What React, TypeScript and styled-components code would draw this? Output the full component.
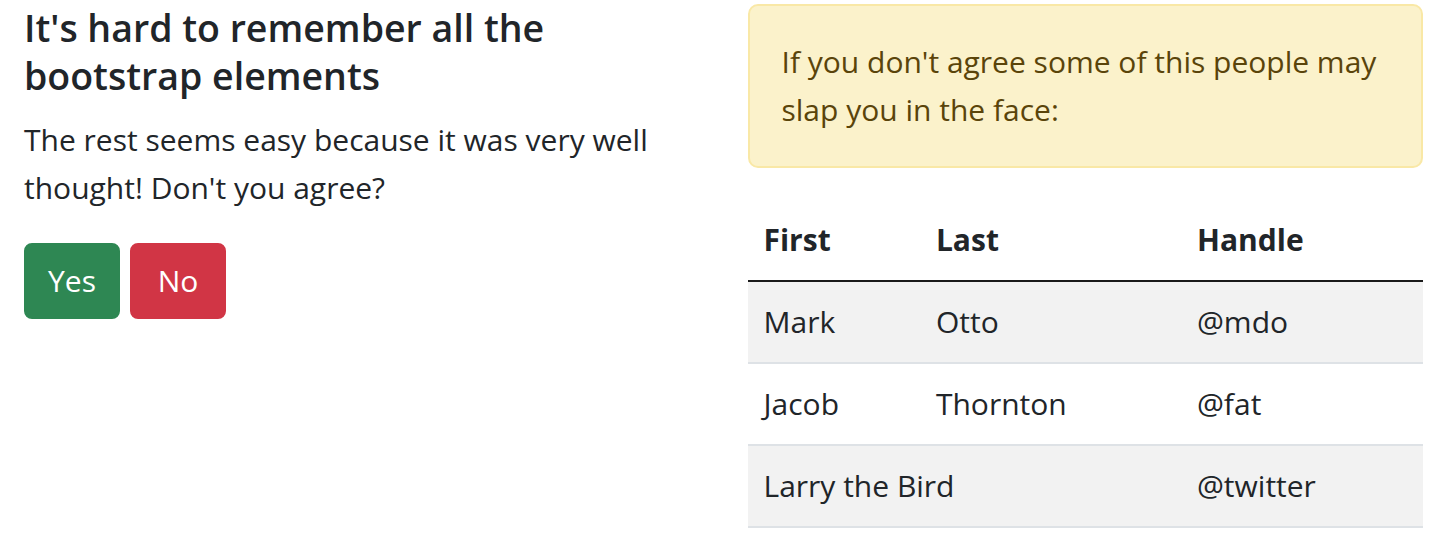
import React from "react";
import styled, { createGlobalStyle } from "styled-components";

const GlobalStyle = createGlobalStyle`
  html, body {
    margin: 0;
    padding: 0;
    background: #fff;
  }
  body {
    font-family: "Open Sans", "Noto Sans", sans-serif;
    color: #212529;
    font-size: 30px;
    line-height: 48px;
  }
`;

const Page = styled.div`
  display: grid;
  grid-template-columns: 1fr 1fr;
  column-gap: 48px;
  padding: 0 24px;
`;

const Column = styled.section`
  min-width: 0;
`;

const Heading = styled.h5`
  margin: 0 0 16px;
  font-size: 37.5px;
  font-weight: 600;
  line-height: 48px;
  padding-top: 4px;
`;

const Lead = styled.p`
  margin: 0 0 31px;
`;

const Actions = styled.div`
  display: flex;
  gap: 10px;
`;

const Button = styled.button<{ $tone: "success" | "danger" }>`
  min-width: 96px;
  font-family: inherit;
  font-size: 30px;
  line-height: 48px;
  padding: 12px 20px;
  text-align: center;
  border: 2px solid ${p => (p.$tone === "success" ? "#2e8753" : "#d13545")};
  background: ${p => (p.$tone === "success" ? "#2e8753" : "#d13545")};
  color: #fff;
  border-radius: 8px;
  cursor: pointer;
`;

const Alert = styled.div`
  margin: 4px 0 32px;
  padding: 32px;
  background: #fbf2cb;
  border: 2px solid #f9e8a6;
  border-radius: 10px;
  color: #5a440a;
`;

const AlertText = styled.p`
  margin: 0;
`;

const Table = styled.table`
  width: 100%;
  border-collapse: collapse;
  color: #212529;
`;

const HeadCell = styled.th`
  text-align: left;
  font-weight: 700;
  padding: 16px;
  border-bottom: 2px solid #1a1a1a;
`;

const Row = styled.tr<{ $striped: boolean }>`
  background: ${p => (p.$striped ? "#f2f2f2" : "transparent")};
`;

const Cell = styled.td`
  padding: 16px;
  border-bottom: 2px solid #dee2e6;
`;

const people = [
  { first: "Mark", last: "Otto", handle: "@mdo" },
  { first: "Jacob", last: "Thornton", handle: "@fat" },
  { first: "Larry the Bird", last: "", handle: "@twitter", span: true },
];

export default function App() {
  return (
    <>
      <GlobalStyle />
      <Page>
        <Column>
          <Heading>It's hard to remember all the bootstrap elements</Heading>
          <Lead>The rest seems easy because it was very well thought! Don't you agree?</Lead>
          <Actions>
            <Button $tone="success">Yes</Button>
            <Button $tone="danger">No</Button>
          </Actions>
        </Column>
        <Column>
          <Alert>
            <AlertText>If you don't agree some of this people may slap you in the face:</AlertText>
          </Alert>
          <Table>
            <thead>
              <tr>
                <HeadCell>First</HeadCell>
                <HeadCell>Last</HeadCell>
                <HeadCell>Handle</HeadCell>
              </tr>
            </thead>
            <tbody>
              {people.map((p, i) => (
                <Row key={p.handle} $striped={i % 2 === 0}>
                  {p.span ? (
                    <Cell colSpan={2}>{p.first}</Cell>
                  ) : (
                    <>
                      <Cell>{p.first}</Cell>
                      <Cell>{p.last}</Cell>
                    </>
                  )}
                  <Cell>{p.handle}</Cell>
                </Row>
              ))}
            </tbody>
          </Table>
        </Column>
      </Page>
    </>
  );
}
